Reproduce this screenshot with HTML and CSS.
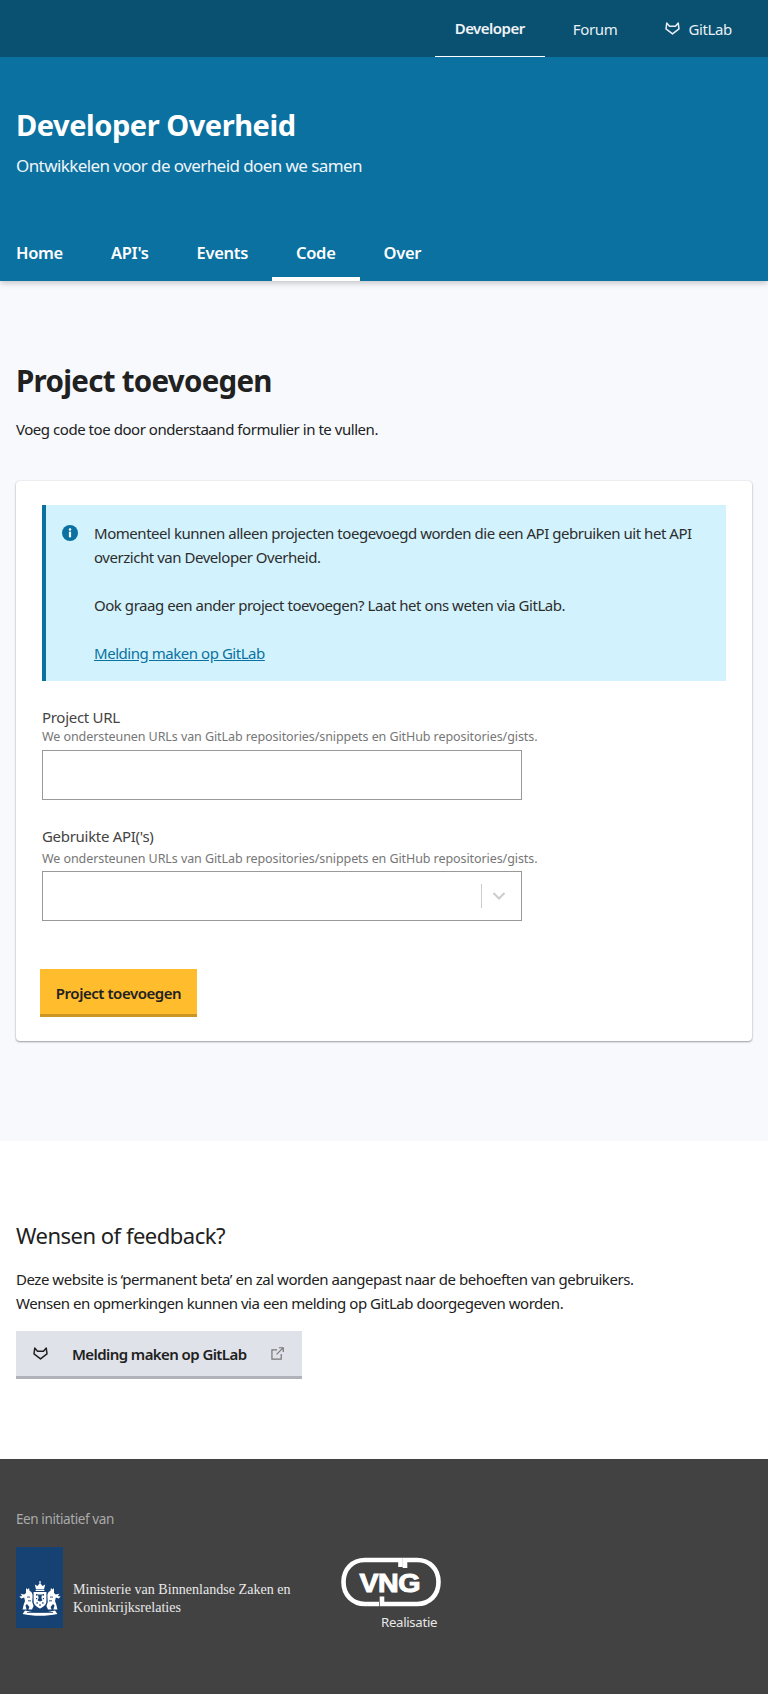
FILE: index.html
```html
<!DOCTYPE html>
<html lang="nl">
<head>
<meta charset="utf-8">
<title>Project toevoegen - Developer Overheid</title>
<link rel="stylesheet" href="styles.css">
</head>
<body>
<svg class="defs" width="0" height="0" aria-hidden="true">
  <symbol id="fox" viewBox="0 0 16 14">
    <path d="M1.8 1.2 L4.8 4.6 H11.2 L14.2 1.2 L15 7.4 L8 12.8 L1 7.4 Z" fill="none" stroke="currentColor" stroke-width="1.6" stroke-linejoin="round"/>
  </symbol>
</svg>
<header class="site-header">
  <div class="topbar">
    <nav class="topnav">
      <a class="topnav-item is-active">Developer</a>
      <a class="topnav-item">Forum</a>
      <a class="topnav-item"><svg class="fox-small"><use href="#fox"/></svg>GitLab</a>
    </nav>
  </div>
  <div class="brand">
    <div class="brand-title">Developer Overheid</div>
    <div class="brand-sub">Ontwikkelen voor de overheid doen we samen</div>
  </div>
  <nav class="tabs">
    <a class="tab">Home</a>
    <a class="tab">API's</a>
    <a class="tab">Events</a>
    <a class="tab is-active">Code</a>
    <a class="tab">Over</a>
  </nav>
</header>

<main class="main">
  <h1 class="page-title">Project toevoegen</h1>
  <p class="intro">Voeg code toe door onderstaand formulier in te vullen.</p>
  <section class="card">
    <div class="alert">
      <svg class="alert-icon" viewBox="0 0 16 16">
        <circle cx="8" cy="8" r="8" fill="#0b71a1"/>
        <circle cx="8" cy="4.6" r="1.25" fill="#fff"/>
        <rect x="6.9" y="6.7" width="2.2" height="5.6" fill="#fff"/>
      </svg>
      <div class="alert-body">
        <p>Momenteel kunnen alleen projecten toegevoegd worden die een API gebruiken uit het API overzicht van Developer Overheid.</p>
        <p>Ook graag een ander project toevoegen? Laat het ons weten via GitLab.</p>
        <p><a class="alert-link">Melding maken op GitLab</a></p>
      </div>
    </div>
    <form class="form">
      <div class="field">
        <label class="label">Project URL</label>
        <div class="hint">We ondersteunen URLs van GitLab repositories/snippets en GitHub repositories/gists.</div>
        <div class="input"></div>
      </div>
      <div class="field field-second">
        <label class="label">Gebruikte API('s)</label>
        <div class="hint">We ondersteunen URLs van GitLab repositories/snippets en GitHub repositories/gists.</div>
        <div class="input select">
          <span class="select-sep"></span>
          <svg class="select-chevron" viewBox="0 0 14 10"><path d="M1.5 2 L7 7.5 L12.5 2" fill="none" stroke="#cccccc" stroke-width="2"/></svg>
        </div>
      </div>
      <button type="button" class="btn-primary">Project toevoegen</button>
    </form>
  </section>
</main>

<section class="feedback">
  <h2 class="feedback-title">Wensen of feedback?</h2>
  <p class="feedback-text">Deze website is ‘permanent beta’ en zal worden aangepast naar de behoeften van gebruikers.<br>Wensen en opmerkingen kunnen via een melding op GitLab doorgegeven worden.</p>
  <a class="btn-secondary">
    <svg class="fox-btn"><use href="#fox"/></svg>
    <span class="btn-secondary-text">Melding maken op GitLab</span>
    <svg class="ext-icon" viewBox="0 0 14 14">
      <path d="M6.5 3 H1 V13 H11 V7.5" fill="none" stroke="#777" stroke-width="1.3"/>
      <path d="M6 8 L13 1 M8.5 0.8 H13.2 V5.5" fill="none" stroke="#777" stroke-width="1.3"/>
    </svg>
  </a>
</section>

<footer class="footer">
  <div class="footer-intro">Een initiatief van</div>
  <div class="footer-logos">
    <div class="ministry">
      <div class="ribbon">
        <svg class="crest" viewBox="0 0 42 35">
          <g fill="#fff">
            <rect x="20.4" y="0" width="1.2" height="2.4"/>
            <path d="M17 8.2 L15.8 3.4 L18.4 5 L21 2 L23.6 5 L26.2 3.4 L25 8.2 Z"/>
            <rect x="16.6" y="8.8" width="8.8" height="1.2"/>
            <path d="M14.6 11 H27.4 V20 C27.4 24 24 26 21 27.5 C18 26 14.6 24 14.6 20 Z"/>
            <path d="M7 7 L8.5 8.6 L10 7 L10.6 10 C13 10.5 13.6 13 13.6 15 L13.2 21 L14.6 25 L13 28.6 H9.4 L10.4 26 L8 23 L6.5 24.6 L7.6 28.6 H3.6 L4.6 24 L6 20 L5.2 16.6 L2.2 17.6 L0.4 15.4 L3.2 15 L1.6 12.8 L5.2 13.6 L7 12 Z"/>
            <path d="M35 7 L33.5 8.6 L32 7 L31.4 10 C29 10.5 28.4 13 28.4 15 L28.8 21 L27.4 25 L29 28.6 H32.6 L31.6 26 L34 23 L35.5 24.6 L34.4 28.6 H38.4 L37.4 24 L36 20 L36.8 16.6 L39.8 17.6 L41.6 15.4 L38.8 15 L40.4 12.8 L36.8 13.6 L35 12 Z"/>
            <path d="M6 29.4 C14 32 28 32 36 29.4 L38.4 33 C28 35.4 14 35.4 3.6 33 Z"/>
          </g>
          <g fill="#154273">
            <rect x="17" y="13" width="1.6" height="1.6"/><rect x="23.4" y="13" width="1.6" height="1.6"/>
            <path d="M19 13.6 L23 13.6 L22.4 17 L23.4 19.4 L21 20.4 L18.6 19.4 L19.6 17 Z"/>
            <rect x="17" y="17" width="1.2" height="1.2"/><rect x="23.8" y="17" width="1.2" height="1.2"/>
            <rect x="17.4" y="21.4" width="1.6" height="1.2"/><rect x="23" y="21.4" width="1.6" height="1.2"/><rect x="20.2" y="23.4" width="1.6" height="1.2"/>
            <rect x="8" y="15.6" width="3" height="0.9"/><rect x="31" y="15.6" width="3" height="0.9"/>
            <rect x="9" y="19.4" width="3" height="0.9"/><rect x="30" y="19.4" width="3" height="0.9"/>
            <rect x="8" y="31" width="26" height="0.8"/>
          </g>
        </svg>
      </div>
      <div class="ministry-name">Ministerie van Binnenlandse Zaken en<br>Koninkrijksrelaties</div>
    </div>
    <div class="vng">
      <svg class="vng-logo" viewBox="0 0 100 50">
        <path d="M59.5 10 V3 H24 C11.5 3 2.5 12 2.5 25 C2.5 38 11.5 47 24 47 H38" fill="none" stroke="#fff" stroke-width="4.6"/>
        <path d="M64 11 V3 H76 C88.5 3 97.5 12 97.5 25 C97.5 38 88.5 47 76 47 H41 V39.5" fill="none" stroke="#fff" stroke-width="4.6"/>
        <text x="18.5" y="34.8" textLength="60.5" lengthAdjust="spacingAndGlyphs" class="vng-text">VNG</text>
      </svg>
      <div class="vng-label">Realisatie</div>
    </div>
  </div>
</footer>
</body>
</html>
```
FILE: styles.css
```css
* { box-sizing: border-box; }
html, body { margin: 0; padding: 0; }
body {
  width: 768px;
  height: 1694px;
  overflow: hidden;
  background: #fff;
  color: #212121;
  font-family: "Noto Sans", "Open Sans", sans-serif;
  font-size: 15px;
  letter-spacing: -0.46px;
  line-height: 24px;
}
.defs { position: absolute; }
p { margin: 0; }

.site-header {
  position: relative;
  z-index: 1;
  height: 281px;
  background: #0b71a1;
  color: #fff;
  box-shadow: 0 2px 6px rgba(0, 0, 0, 0.22);
}
.topbar { height: 57px; background: #0a5071; }
.topnav { display: flex; justify-content: flex-end; gap: 8px; padding-right: 16px; }
.topnav-item {
  display: flex;
  align-items: center;
  height: 57px;
  padding: 0 20px;
  color: #e8f0f5;
  font-size: 15px;
  letter-spacing: -0.35px;
}
.topnav-item.is-active {
  font-weight: 600;
  color: #f0f4f7;
  letter-spacing: -0.5px;
  border-bottom: 1px solid #fff;
}
.fox-small { width: 15px; height: 13px; margin-right: 8px; }

.brand { padding: 49px 16px 0; height: 165px; }
.brand-title { font-size: 29px; line-height: 38px; font-weight: 700; letter-spacing: -0.45px; }
.brand-sub { margin-top: 10px; font-size: 17px; line-height: 24px; letter-spacing: -0.58px; color: #eef5f9; }

.tabs { display: flex; padding-left: 16px; gap: 48px; height: 59px; }
.tab {
  position: relative;
  display: flex;
  align-items: center;
  height: 59px;
  padding-top: 3px;
  font-size: 16.5px;
  font-weight: 600;
  letter-spacing: -0.3px;
}
.tab.is-active::after {
  content: "";
  position: absolute;
  left: -24px;
  right: -24px;
  bottom: 0;
  height: 4px;
  background: #fff;
}

.main { height: 860px; padding: 76px 16px 0; background: #f7f9fd; }
.page-title { margin: 0; font-size: 29.5px; line-height: 48px; font-weight: 700; letter-spacing: -0.72px; }
.intro { margin-top: 12px; }

.card {
  height: 560px;
  margin-top: 40px;
  padding: 24px 26px 0;
  background: #fff;
  border-radius: 4px;
  box-shadow: 0 0 2px rgba(0, 0, 0, 0.12), 0 1px 2px rgba(0, 0, 0, 0.35);
}
.alert {
  display: flex;
  height: 176px;
  padding: 16px 0 0 16px;
  background: #d2f3fd;
  border-left: 4px solid #0b71a1;
  color: #2d2d2d;
}
.alert-icon { flex: none; width: 16px; height: 16px; margin: 4px 16px 0 0; }
.alert-body p { margin-bottom: 24px; }
.alert-link { color: #0b71a1; text-decoration: underline; }

.form { padding-top: 24px; }
.label { display: block; font-size: 15px; color: #444; line-height: 24px; letter-spacing: -0.3px; }
.hint { font-size: 12.5px; line-height: 16px; color: #767676; letter-spacing: -0.08px; }
.input {
  position: relative;
  display: flex;
  align-items: center;
  justify-content: flex-end;
  width: 480px;
  height: 50px;
  margin-top: 5px;
  background: #fff;
  border: 1px solid #999;
}
.field-second { margin-top: 24px; }
.field-second .hint { margin-top: 3px; }
.field-second .input { margin-top: 4px; }
.select-sep { width: 1px; height: 24px; background: #ccc; }
.select-chevron { width: 14px; height: 10px; margin: 0 15px 0 10px; }

.btn-primary {
  display: block;
  width: 157px;
  height: 48px;
  margin: 48px 0 0 -2px;
  padding: 2px 0 0;
  background: #ffbc2c;
  border: 0;
  border-bottom: 3px solid #cc9626;
  color: #212121;
  font: 600 15px/24px "Noto Sans", sans-serif;
  letter-spacing: -0.45px;
}

.feedback { height: 318px; padding: 76px 16px 0; background: #fff; }
.feedback-title { margin: 0; font-size: 22px; font-weight: 400; line-height: 36px; letter-spacing: -0.5px; }
.feedback-text { margin-top: 14px; }
.btn-secondary {
  display: flex;
  align-items: center;
  width: 286px;
  height: 48px;
  margin-top: 16px;
  padding: 0 18px 0 17px;
  background: #e0e2e9;
  border-bottom: 3px solid #b0b2b9;
  font-size: 15px;
  font-weight: 600;
  letter-spacing: -0.58px;
}
.fox-btn { width: 15px; height: 13px; flex: none; }
.btn-secondary-text { flex: 1; margin-left: 24px; }
.ext-icon { width: 13px; height: 13px; flex: none; }

.footer { height: 235px; padding: 48px 16px 0; background: #424242; color: #fff; }
.footer-intro { font-size: 13.5px; color: #aaa; letter-spacing: -0.4px; }
.footer-logos { display: flex; margin-top: 16px; }
.ministry { display: flex; width: 325px; }
.ribbon { display: flex; flex: none; align-items: flex-end; justify-content: center; width: 47px; height: 81px; background: #154273; padding-bottom: 12px; }
.crest { display: block; width: 42px; height: 35px; flex: none; }
.ministry-name {
  margin: 33px 0 0 10px;
  font-family: "Liberation Serif", serif;
  font-size: 14.1px;
  line-height: 18px;
  letter-spacing: 0;
  color: #e8e8e8;
}
.vng { width: 100px; margin-top: 10px; }
.vng-logo { display: block; width: 100px; height: 50px; }
.vng-text { font: 700 25px "Liberation Sans", sans-serif; fill: #fff; stroke: #fff; stroke-width: 1px; }
.vng-label { margin: 5px 0 0 40px; font-size: 13.2px; line-height: 20px; letter-spacing: -0.3px; color: #e8e8e8; }
```
